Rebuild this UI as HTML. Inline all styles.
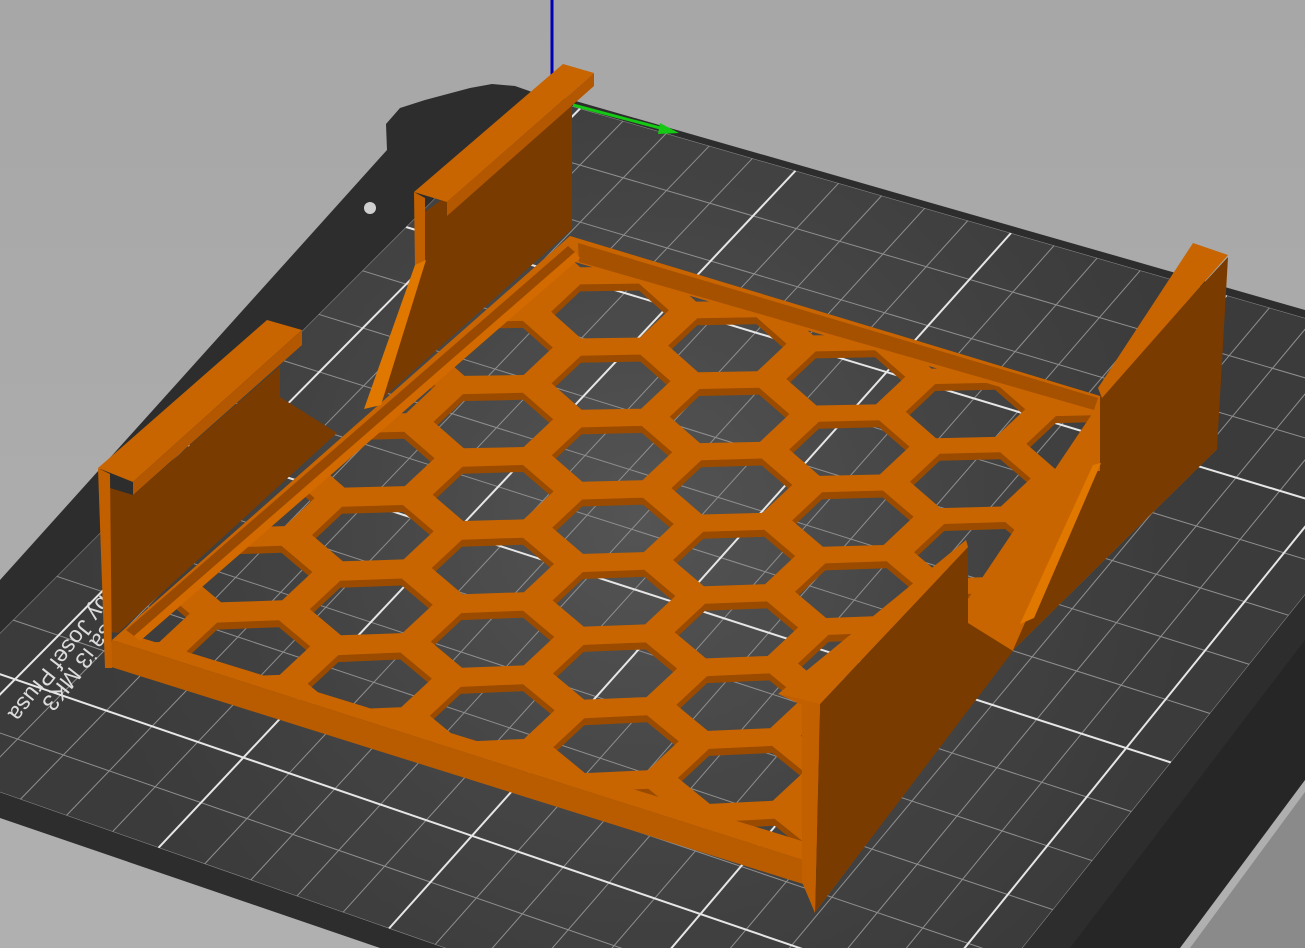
<!DOCTYPE html>
<html><head><meta charset="utf-8">
<style>
html,body{margin:0;padding:0;width:1305px;height:948px;overflow:hidden;background:#a9a9a9;}
svg{display:block;position:absolute;left:0;top:0;}
text{font-family:"Liberation Sans",sans-serif;}
</style></head>
<body>
<svg id="s" width="1305" height="948" viewBox="0 0 1305 948">
<defs>
  <linearGradient id="bg" x1="0" y1="0" x2="0" y2="1">
    <stop offset="0" stop-color="#a7a7a7"/><stop offset="1" stop-color="#b0b0b0"/>
  </linearGradient>
  <radialGradient id="bedg" cx="640" cy="520" r="560" gradientUnits="userSpaceOnUse">
    <stop offset="0" stop-color="#545454"/><stop offset="0.6" stop-color="#434343"/><stop offset="1" stop-color="#3b3b3b"/>
  </radialGradient>
  <clipPath id="inner"><polygon points="575,262 1092,414 805,842 135,636"/></clipPath>
  <clipPath id="print"><polygon points="537,96 1485,370 896,1106 -118,751"/></clipPath>
  <mask id="m0" maskUnits="userSpaceOnUse" x="0" y="0" width="1305" height="948">
    <rect width="1305" height="948" fill="#fff"/>
    <g clip-path="url(#inner)"><path id="h0" fill="#000"/></g>
  </mask>
  <mask id="m1" maskUnits="userSpaceOnUse" x="0" y="0" width="1305" height="948">
    <rect width="1305" height="948" fill="#fff"/>
    <g clip-path="url(#inner)"><path id="h1" fill="#000" transform="translate(0,7)"/></g>
  </mask>
</defs>

<rect width="1305" height="948" fill="url(#bg)"/>

<!-- bed -->
<polygon fill="#2d2d2d" points="387,150 386,124 400,108 425,100 470,88 492,84 515,86 535,93 572,100 1305,310 1305,775 1175,948 380,948 0,818 0,580"/>
<polygon fill="#262626" points="1305,640 1305,780 1180,948 1070,948"/>
<polygon fill="#8a8a8a" points="1305,792 1305,948 1190,948"/>
<polygon fill="url(#bedg)" points="537,96 1485,370 896,1106 -118,751"/>
<g id="grid" clip-path="url(#print)"></g>
<circle cx="370" cy="208" r="6" fill="#cfcfcf"/>

<!-- bed text -->
<text transform="translate(101,594) rotate(128)" font-size="23" fill="#dcdcdc">by Josef Prusa</text>
<text transform="translate(41,703) rotate(128)" font-size="23" fill="#dcdcdc" text-anchor="end">Original Prusa i3 MK3</text>

<!-- axes -->
<line x1="552" y1="0" x2="552" y2="100" stroke="#0000b4" stroke-width="3"/>
<line x1="573" y1="105" x2="664" y2="129" stroke="#14c814" stroke-width="3"/>
<polygon points="660,123 679,133 658,134" fill="#14c814"/>

<!-- plate -->
<polygon fill="#9a4b00" mask="url(#m1)" points="570,236 1100,396 1217,449 1013,650 815,912 803,860 112,640"/>
<polygon fill="#c96500" mask="url(#m0)" points="570,236 1100,396 1217,449 1013,650 815,912 803,860 112,640"/>
<polygon fill="#b95c00" points="112,640 803,860 803,884 108,666"/>
<!-- back rail inner face -->
<polygon fill="#a55100" points="578,243 1098,398 1094,410 579,262"/>
<!-- left groove -->
<polygon fill="#9a4a00" points="126,630 568,246 575,252 134,636"/>
<polygon fill="#d26a00" points="134,636 575,252 580,258 140,641"/>
<!-- notch bar -->
<polygon fill="#c96500" points="965,603 1030,612 1027,626 968,622"/>

<!-- W1 back-left wall -->
<polygon fill="#7a3b00" points="425,212 572,103 572,229 373,407 425,262"/>
<polygon fill="#c26000" points="414,192 425,198 425,262 415,267"/>
<polygon fill="#e07800" points="415,265 426,260 381,405 364,409"/>
<polygon fill="#c96500" points="414,192 563,64 594,73 447,202"/>
<polygon fill="#b35800" points="447,202 594,73 594,86 447,216"/>

<!-- W2 front-left wall -->
<polygon fill="#7a3b00" points="110,488 133,495 280,366 280,397 337,433 118,633 110,632"/>
<polygon fill="#c26000" points="98,468 110,474 112,668 105,668"/>
<polygon fill="#c96500" points="98,468 267,320 302,330 133,482"/>
<polygon fill="#b35800" points="133,482 302,330 302,345 133,495"/>

<!-- W3 right-back wall -->
<polygon fill="#7a3b00" points="1100,395 1228,257 1217,449 1013,650 1027,618 1093,471 1100,471"/>
<polygon fill="#e07800" points="1093,465 1101,463 1034,618 1020,624"/>
<polygon fill="#c96500" points="1098,388 1193,243 1228,255 1102,398"/>

<!-- W4 right-front wall -->
<polygon fill="#7a3b00" points="820,704 968,547 968,623 1013,651 815,912"/>
<polygon fill="#c26000" points="778,694 820,704 815,913 802,882 802,705"/>
<polygon fill="#c96500" points="778,694 966,540 968,547 820,704"/>

</svg>
<script>
(function(){
  function P(s,t){
    var a=[537,96],b=[1485,370],c=[-118,751],d=[896,1106];
    return [(1-s)*(1-t)*a[0]+s*(1-t)*b[0]+(1-s)*t*c[0]+s*t*d[0],
            (1-s)*(1-t)*a[1]+s*(1-t)*b[1]+(1-s)*t*c[1]+s*t*d[1]];
  }
  var minor='',major='',NS=22,NT=15;
  for(var i=0;i<=NS;i++){
    var s=i/NS,p=P(s,0),q=P(s,1);
    var l='<line x1="'+p[0].toFixed(1)+'" y1="'+p[1].toFixed(1)+'" x2="'+q[0].toFixed(1)+'" y2="'+q[1].toFixed(1)+'"/>';
    if(i%5==1) major+=l; else minor+=l;
  }
  for(var j=0;j<=NT;j++){
    var t=j/NT,p=P(0,t),q=P(1,t);
    var l='<line x1="'+p[0].toFixed(1)+'" y1="'+p[1].toFixed(1)+'" x2="'+q[0].toFixed(1)+'" y2="'+q[1].toFixed(1)+'"/>';
    if(j%5==3) major+=l; else minor+=l;
  }
  document.getElementById('grid').innerHTML=
    '<g stroke="#8f8f8f" stroke-width="1">'+minor+'</g><g stroke="#e6e6e6" stroke-width="2">'+major+'</g>';

  var d='',k=0.76;
  for(var b=-3;b<=11;b++){
    for(var a=-7;a<=7;a++){
      var r=b+a*0.47;
      var ux=116.7+1.27*r, uy=34-0.6*r, vx=1, vy=71+0.2*r;
      var cx=610+a*ux+b*vx, cy=311+a*uy+b*vy;
      var pts=[[2/3,-1/3],[1/3,1/3],[-1/3,2/3],[-2/3,1/3],[-1/3,-1/3],[1/3,-2/3]];
      d+='M';
      for(var n=0;n<6;n++){
        var x=cx+k*(pts[n][0]*ux+pts[n][1]*vx), y=cy+k*(pts[n][0]*uy+pts[n][1]*vy);
        d+=(n?'L':'')+x.toFixed(1)+','+y.toFixed(1);
      }
      d+='Z';
    }
  }
  document.getElementById('h0').setAttribute('d',d);
  document.getElementById('h1').setAttribute('d',d);
})();
</script>
</body></html>
